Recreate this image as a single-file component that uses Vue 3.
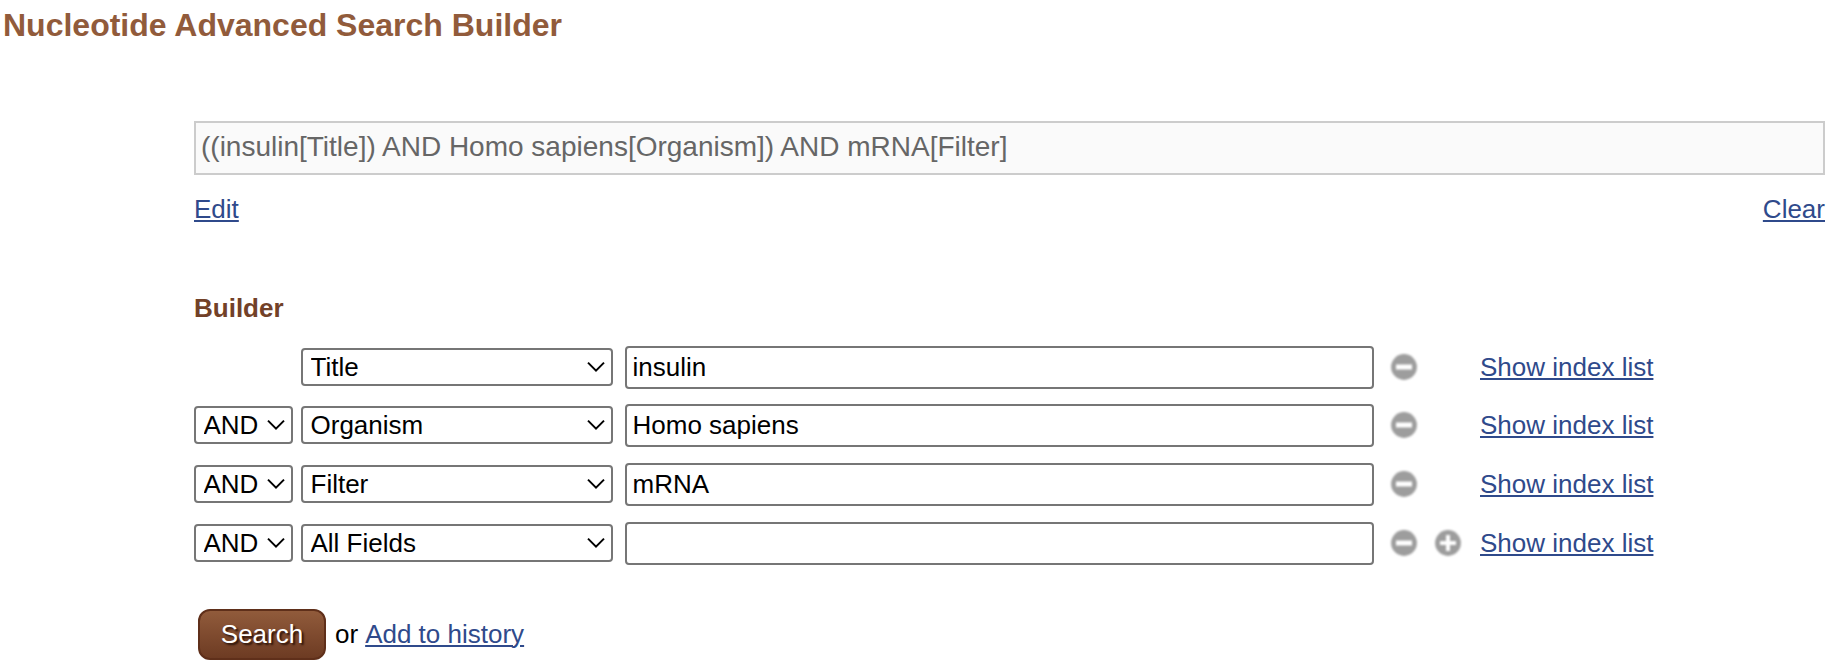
<script setup>
import { ref } from 'vue'

const query = '((insulin[Title]) AND Homo sapiens[Organism]) AND mRNA[Filter]'
const rows = ref([
  { op: '', field: 'Title', term: 'insulin' },
  { op: 'AND', field: 'Organism', term: 'Homo sapiens' },
  { op: 'AND', field: 'Filter', term: 'mRNA' },
  { op: 'AND', field: 'All Fields', term: '', last: true },
])
const fields = ['All Fields', 'Filter', 'Organism', 'Title']
const ops = ['AND', 'OR', 'NOT']
</script>

<template>
  <main class="page">
    <h1 class="title">Nucleotide Advanced Search Builder</h1>
    <section class="content">
      <div class="query">{{ query }}</div>
      <div class="query-links">
        <a class="link" href="#">Edit</a>
        <a class="link" href="#">Clear</a>
      </div>
      <h2 class="subtitle">Builder</h2>
      <div class="rows">
        <div v-for="(row, i) in rows" :key="i" class="row">
          <div class="op">
            <div v-if="row.op" class="pick">
              <select v-model="row.op" class="select">
                <option v-for="o in ops" :key="o">{{ o }}</option>
              </select>
              <svg class="chevron" width="18" height="12" viewBox="0 0 18 12"><path d="M1 1.6 9 9.6 17 1.6" /></svg>
            </div>
          </div>
          <div class="pick field">
            <select v-model="row.field" class="select">
              <option v-for="f in fields" :key="f">{{ f }}</option>
            </select>
            <svg class="chevron" width="18" height="12" viewBox="0 0 18 12"><path d="M1 1.6 9 9.6 17 1.6" /></svg>
          </div>
          <input v-model="row.term" class="term" type="text" />
          <div class="icons">
            <svg class="icon" width="28" height="28" viewBox="0 0 28 28">
              <circle cx="14" cy="14" r="12.9" />
              <rect x="6" y="11.5" width="16" height="5" />
            </svg>
            <svg v-if="row.last" class="icon" width="28" height="28" viewBox="0 0 28 28">
              <circle cx="14" cy="14" r="12.9" />
              <path d="M12 6h4v6h6v4h-6v6h-4v-6H6v-4h6z" />
            </svg>
          </div>
          <a class="link" href="#">Show index list</a>
        </div>
      </div>
      <div class="actions">
        <button class="search" type="button">Search</button>
        <span class="or">or</span>
        <a class="link" href="#">Add to history</a>
      </div>
    </section>
  </main>
</template>

<style>
body {
  margin: 0;
  background: #fff;
}
</style>

<style scoped>
.page {
  box-sizing: border-box;
  height: 664px;
  overflow: hidden;
  font: 26px/30px "Liberation Sans", Arial, sans-serif;
  color: #000;
}
.title {
  margin: 0;
  padding: 7px 0 0 3px;
  height: 114px;
  font-size: 32px;
  line-height: 36px;
  color: #915b3b;
}
.content {
  margin: 0 9px 0 194px;
}
.query {
  box-sizing: border-box;
  height: 54px;
  padding: 0 5px;
  border: 2px solid #ccc;
  background: #fafafa;
  color: #666;
  font-size: 28px;
  line-height: 47px;
}
.query-links {
  display: flex;
  justify-content: space-between;
  padding-top: 19px;
}
.link {
  color: #2f4a8b;
  text-decoration: underline;
  text-decoration-thickness: 2px;
  text-underline-offset: 2px;
}
.subtitle {
  margin: 69px 0 23px;
  font-size: 26px;
  line-height: 30px;
  color: #724128;
}
.rows {
  display: grid;
  grid-template-rows: 58px 59px 59px 43px;
}
.row {
  display: flex;
  align-items: center;
  height: 42px;
}
.op {
  width: 99px;
  margin-right: 8px;
}
.pick {
  display: grid;
  grid-template-columns: 1fr 26px;
  align-items: center;
  height: 38px;
}
.field {
  width: 312px;
  margin-right: 12px;
}
.select {
  grid-area: 1 / 1 / 2 / 3;
  appearance: none;
  box-sizing: border-box;
  width: 100%;
  height: 38px;
  margin: 0;
  padding: 0 7.5px;
  border: 2px solid #767676;
  border-radius: 4px;
  background: #fff;
  color: #000;
  font: inherit;
}
.chevron {
  grid-area: 1 / 2;
  pointer-events: none;
  fill: none;
  stroke: #000;
  stroke-width: 2;
}
.term {
  box-sizing: border-box;
  align-self: flex-start;
  flex: none;
  width: 749px;
  height: 43px;
  margin: 0 16px 0 0;
  padding: 0 5.5px 1px;
  border: 2px solid #767676;
  border-radius: 4px;
  background: #fff;
  color: #000;
  font: inherit;
  outline: none;
}
.icons {
  display: flex;
  gap: 16px;
  width: 90px;
}
.icon {
  display: block;
  fill: #fff;
  filter: blur(0.8px);
}
.icon circle {
  fill: #9d9d9d;
}
.actions {
  display: flex;
  align-items: center;
  margin: 44px 0 0 4px;
}
.search {
  box-sizing: border-box;
  width: 128px;
  height: 51px;
  margin: 0 9px 0 0;
  padding: 0 0 2px;
  border: 2px solid #5f2f1a;
  border-radius: 12px;
  background: linear-gradient(#915b3b, #6d3b23);
  color: #fff;
  font: inherit;
  text-shadow: 2px 2px 2px #2b1208;
}
.or {
  margin-right: 7px;
}
.or,
.actions .link {
  padding-bottom: 2px;
}
</style>
